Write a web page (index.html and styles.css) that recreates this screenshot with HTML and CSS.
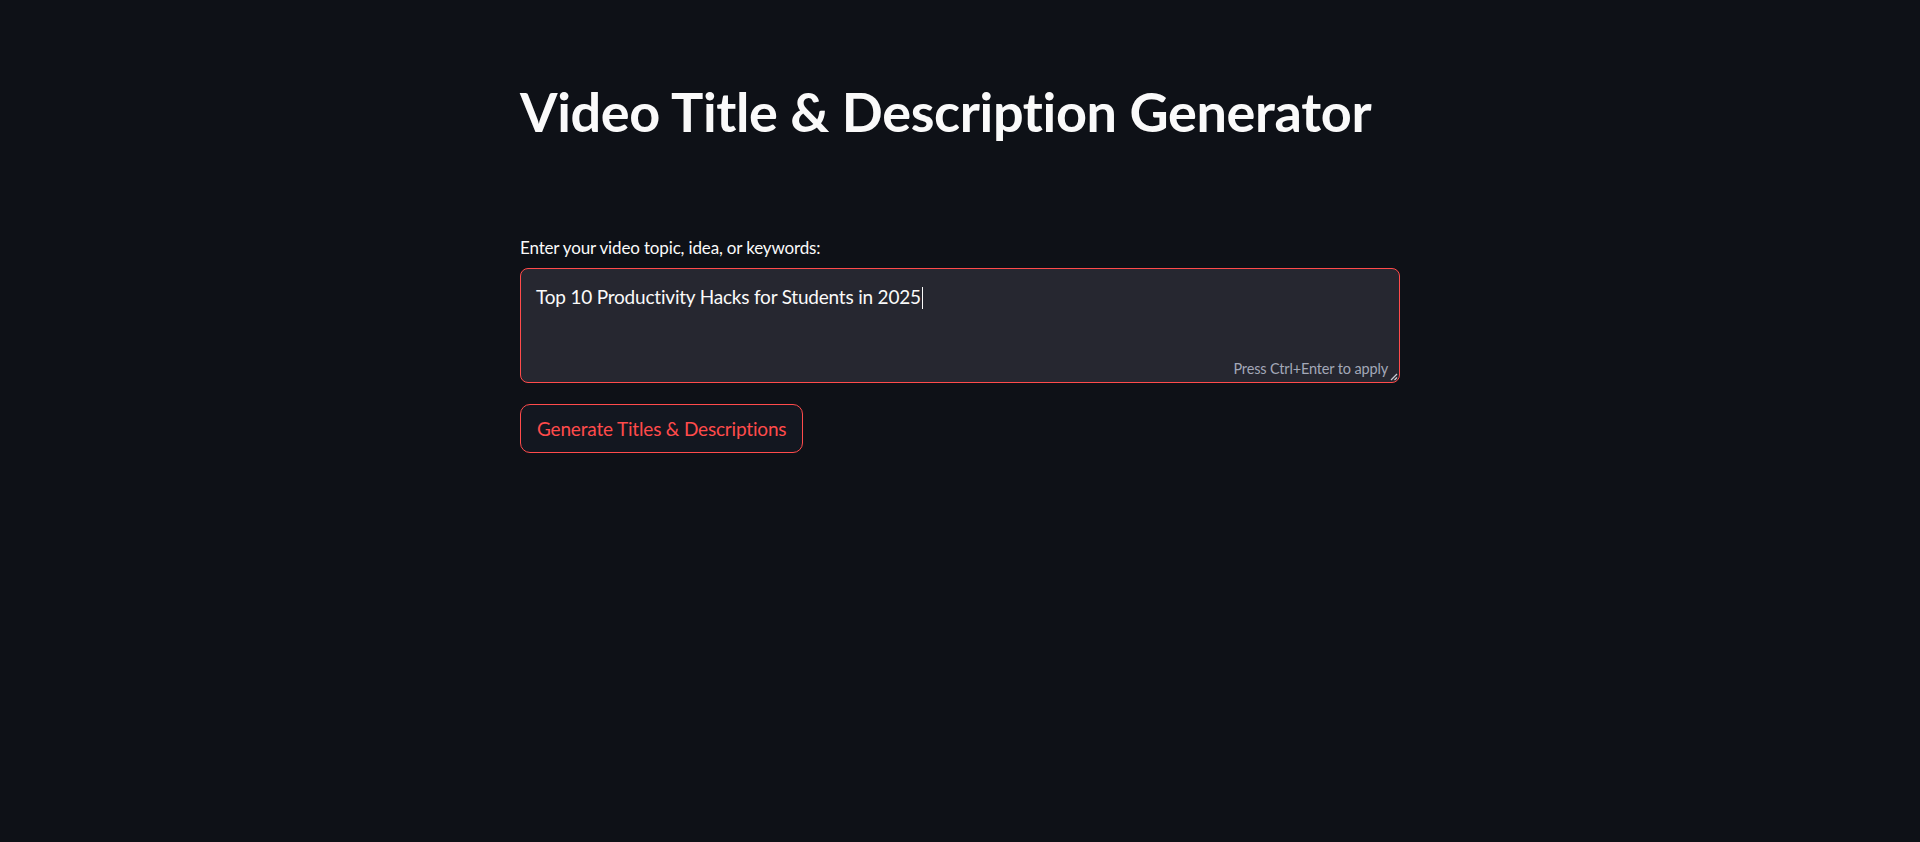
FILE: index.html
```html
<!DOCTYPE html>
<html lang="en">
<head>
<meta charset="utf-8">
<title>Video Title &amp; Description Generator</title>
<link rel="stylesheet" href="styles.css">
</head>
<body>
<main class="page">
  <div class="block">
    <h1 class="title">Video Title &amp; Description Generator</h1>
    <div class="field">
      <label class="label">Enter your video topic, idea, or keywords:</label>
      <div class="textarea" role="textbox" aria-multiline="true">
        <div class="textarea-text">Top 10 Productivity Hacks for Students in 2025<span class="caret"></span></div>
        <div class="hint">Press Ctrl+Enter to apply</div>
        <svg class="resize" width="9" height="9" viewBox="0 0 9 9" aria-hidden="true">
          <path d="M8 2 L2 8" stroke="#c9ccd4" stroke-width="1.3"/>
          <path d="M8 5.5 L5.5 8" stroke="#c9ccd4" stroke-width="1.3"/>
        </svg>
      </div>
    </div>
    <button class="btn" type="button">Generate Titles &amp; Descriptions</button>
  </div>
</main>
</body>
</html>
```
FILE: styles.css
```css
html, body {
  margin: 0;
  padding: 0;
  background: #0e1117;
  height: 100%;
}
body {
  font-family: Lato, "Noto Sans", "Liberation Sans", sans-serif;
  color: #fafafa;
}
.page {
  display: flex;
  justify-content: center;
  min-height: 100%;
}
.block {
  width: 880px;
  display: flex;
  flex-direction: column;
  align-items: flex-start;
  padding-top: 79px;
}
.title {
  margin: 0;
  font-size: 54px;
  line-height: 66px;
  font-weight: 700;
  color: #fafafa;
  letter-spacing: -0.35px;
}
.field {
  margin-top: 92px;
  width: 100%;
  display: flex;
  flex-direction: column;
}
.label {
  font-size: 17px;
  line-height: 21px;
  color: #fafafa;
  letter-spacing: -0.15px;
  margin-bottom: 10px;
}
.textarea {
  position: relative;
  box-sizing: border-box;
  height: 115px;
  width: 100%;
  background: #262730;
  border: 1px solid #ff4b4b;
  border-radius: 8px;
  display: flex;
  flex-direction: column;
  padding: 16px 11px 4px 15px;
}
.textarea-text {
  font-size: 19px;
  line-height: 24px;
  letter-spacing: -0.2px;
  color: #fafafa;
}
.caret {
  display: inline-block;
  width: 1px;
  height: 22px;
  background: #fafafa;
  vertical-align: -5px;
  margin-left: 1px;
}
.hint {
  margin-top: auto;
  align-self: flex-end;
  font-size: 14.5px;
  line-height: 18px;
  letter-spacing: -0.15px;
  color: #a3a8b8;
}
.resize {
  position: absolute;
  right: 1px;
  bottom: 1px;
}
.btn {
  margin-top: 21px;
  box-sizing: border-box;
  height: 49px;
  padding: 0 16px;
  background: #131720;
  border: 1px solid #ff4b4b;
  border-radius: 10px;
  color: #ff4b4b;
  font-family: Lato, "Noto Sans", "Liberation Sans", sans-serif;
  font-size: 19px;
  line-height: 24px;
  letter-spacing: -0.18px;
  display: flex;
  align-items: center;
  cursor: pointer;
}
```
